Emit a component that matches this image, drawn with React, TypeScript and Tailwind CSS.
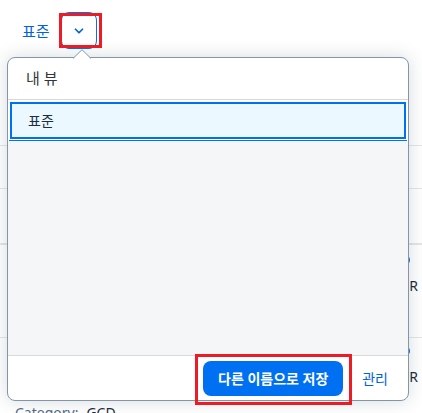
import { ChevronDown } from "lucide-react"

const BackgroundRows = () => {
    return <div className="mt-[96px] flex flex-col">
        <div className="h-[43px] border-t border-[#e5e5e5]" />
        <div className="h-[55px] border-t border-[#e5e5e5]" />
        <div className="h-[94px] border-t-2 border-[#e5e5e5] flex flex-col items-end pr-[4px]">
            <div className="mt-[10px] mr-[8px] w-[10px] h-[10px] rounded-full bg-[#0070f2]" />
            <div className="mt-[11px] text-[14px] text-[#1d2d3e] leading-[20px]">EUR</div>
        </div>
        <div className="h-[66px] border-t border-[#e5e5e5] flex flex-col items-end pr-[4px]">
            <div className="mt-[8px] mr-[8px] w-[10px] h-[10px] rounded-full bg-[#0070f2]" />
            <div className="mt-[11px] text-[14px] text-[#1d2d3e] leading-[20px]">EUR</div>
        </div>
        <div className="pl-[15px] text-[14px] leading-[20px]">
            <span className="text-[#556b82]">Category:</span>
            <span className="ml-[8px] text-[#1d2d3e]">GCD</span>
        </div>
    </div>
}

const ViewPopover = () => {
    return <div className="absolute left-[7px] top-[57px] w-[402px] h-[344px] flex flex-col rounded-[8px] border border-[#8396a8] bg-white shadow-[0_0_18px_rgba(34,53,72,0.18)]">
        <svg className="absolute -top-[9px] left-[65px]" width="18" height="10" viewBox="0 0 18 10">
            <path d="M0 9.5 L9 0.7 L18 9.5 Z" fill="white" />
            <path d="M0 9.5 L9 0.7 L18 9.5" fill="none" stroke="#8396a8" strokeWidth="1" />
        </svg>
        <div className="h-[42px] flex items-center pl-[18px] text-[15px] text-[#32363a] border-b border-[#d9d9d9]">
            내 뷰
        </div>
        <div className="mt-[2px] mx-[2px] h-[37px] flex items-center pl-[16px] border-2 border-[#0070f2] bg-[#ebf8ff] text-[14px] text-[#1d2d3e]">
            표준
        </div>
        <div className="mt-[1px] mx-[1px] h-[1px] bg-[#0070f2]" />
        <div className="flex-1 bg-[#f5f6f7] border-b border-[#d9d9d9]" />
        <div className="h-[44px] flex items-center justify-end pr-[20px] gap-[19px] rounded-b-[8px]">
            <button className="h-[35px] w-[140px] rounded-[8px] bg-[#0070f2] text-white text-[14px] font-bold">
                다른 이름으로 저장
            </button>
            <span className="text-[14px] text-[#0064d9]">관리</span>
        </div>
    </div>
}

export default function App() {
    return <div className="relative w-[422px] h-[413px] overflow-hidden bg-white font-['Noto_Sans','Noto_Sans_CJK_KR',sans-serif]">
        <div className="flex items-start pt-[12px] pl-[22px]">
            <span className="mt-[9px] text-[15px] leading-[20px] text-[#0064d9]">표준</span>
            <button className="ml-[11px] w-[36px] h-[37px] flex items-center justify-center rounded-[8px] border border-[#0070f2] bg-white">
                <ChevronDown size={14} strokeWidth={3} color="#0064d9" />
            </button>
        </div>
        <BackgroundRows />
        <ViewPopover />
        <div className="absolute left-[59px] top-[13px] w-[43px] h-[35px] border-[3px] border-[#ed1c24]" />
        <div className="absolute left-[195px] top-[354px] w-[157px] h-[51px] border-[3px] border-[#ed1c24]" />
    </div>
}
